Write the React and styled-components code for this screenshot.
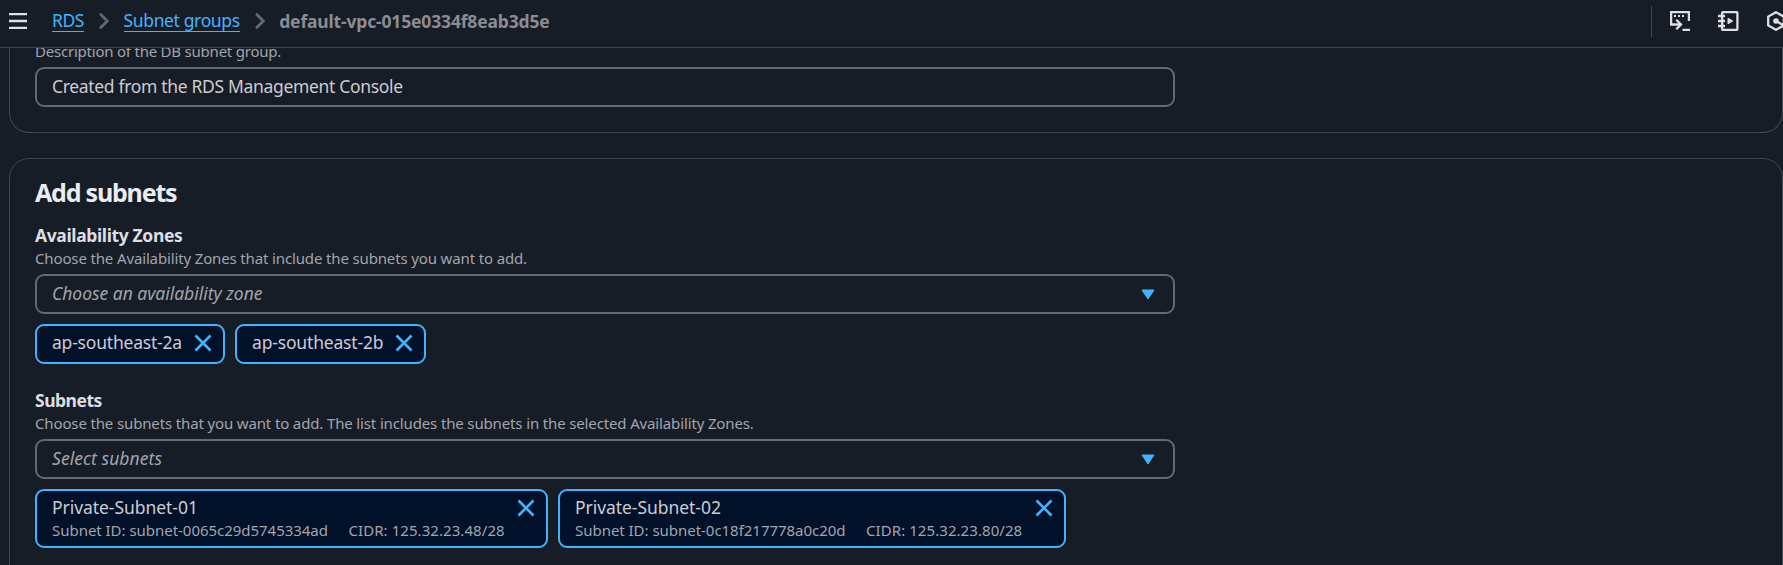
import React from 'react';
import styled, { createGlobalStyle } from 'styled-components';

const Global = createGlobalStyle`
  * { box-sizing: border-box; }
  html, body { margin: 0; height: 565px; overflow: hidden; background: #161d26; }
  body { font-family: "Noto Sans", "Open Sans", sans-serif; font-size: 17.5px; color: #ccccd1; }
`;
const Page = styled.div`
  width: 1783px;
  height: 565px;
  overflow: hidden;
  display: flex;
  flex-direction: column;
  background: #161d26;
`;
const TopBar = styled.header`
  height: 48px;
  flex: none;
  display: flex;
  align-items: center;
  border-bottom: 1px solid #424650;
  padding: 0 0 5px 9px;
`;
const MenuButton = styled.button`
  display: flex;
  padding: 0;
  margin-right: 25px;
  border: 0;
  background: none;
  color: #dedee3;
`;
const Crumbs = styled.nav`
  display: flex;
  align-items: center;
  flex: 1;
  color: #656871;
`;
const Text = styled.span`
  display: block;
  white-space: nowrap;
  font-size: 17.5px;
  line-height: 25px;
  font-weight: ${(p) => (p.$bold ? 700 : 400)};
  letter-spacing: ${(p) => p.$track || 0}px;
  color: #ccccd1;
`;
const CrumbLink = styled(Text)`
  color: #42b4ff;
  border-bottom: 1px solid #42b4ff;
  line-height: 21px;
`;
const CrumbCurrent = styled(Text)`
  color: #8c8c94;
`;
const Heading = styled(Text)`
  font-size: 25px;
  line-height: 30px;
  color: #ebebf0;
`;
const Label = styled(Text)`
  color: #dedee3;
`;
const Placeholder = styled(Text)`
  font-style: italic;
  color: #a4a4ad;
`;
const Hint = styled(Text)`
  font-size: 15px;
  line-height: 20px;
  color: #a4a4ad;
`;
const Chevron = styled.svg`
  flex: none;
  margin: 0 13.5px 0 14px;
`;
const Tools = styled.div`
  display: flex;
  align-items: center;
  gap: 28px;
  height: 31px;
  width: 132px;
  padding-left: 18px;
  border-left: 1px solid #424650;
  color: #dedee3;
  svg { flex: none; }
`;
const Main = styled.main`
  flex: 1;
  min-height: 0;
  overflow: hidden;
  padding-left: 9px;
  display: flex;
  flex-direction: column;
  gap: 25px;
`;
const Panel = styled.section`
  flex: none;
  border: 1px solid #424650;
  border-radius: 20px;
  padding: 0 25px;
  ${(p) => p.$top && 'border-top: 0; border-top-left-radius: 0; border-top-right-radius: 0; height: 85px;'}
  ${(p) => p.$open && 'height: 460px; padding-top: 18px;'}
`;
const Clip = styled.div`
  height: 19px;
  display: flex;
  align-items: flex-end;
  overflow: hidden;
  padding-bottom: 6px;
`;
const Field = styled.div`
  width: 1140px;
  height: 40px;
  display: flex;
  align-items: center;
  justify-content: space-between;
  padding: 0 18px 2px 15px;
  border: 2px solid #656871;
  border-radius: 9px;
`;
const ArrowIcon = styled.svg`
  margin-top: 2px;
`;
const Tokens = styled.div`
  display: flex;
  gap: 10px;
  margin-top: 10px;
`;
const Token = styled.div`
  display: flex;
  width: ${(p) => p.$w}px;
  height: ${(p) => p.$h}px;
  justify-content: space-between;
  padding: 4px 11px 0 15px;
  border: 2px solid #42b4ff;
  border-radius: 9px;
  background: #001129;
`;
const Details = styled.div`
  display: flex;
  gap: 20.5px;
`;
const CloseIcon = styled.svg`
  margin-top: 3.5px;
  flex: none;
`;
const Group = styled.div`
  margin-top: ${(p) => p.$mt}px;
  ${Field} { margin-top: 6px; }
`;

const Sep = () => (
  <Chevron width="12" height="18" viewBox="0 0 12 18" fill="none" stroke="#656871" strokeWidth="2.8"><path d="M2 1.800l7.300 7.200L2 16.200" /></Chevron>
);
const Arrow = () => (
  <ArrowIcon width="14" height="11" viewBox="0 0 14 11"><path d="M1 1h12L7 10z" fill="#42b4ff" stroke="#42b4ff" strokeLinejoin="round" /></ArrowIcon>
);
const Close = () => (
  <CloseIcon width="18" height="18" viewBox="0 0 18 18" fill="none" stroke="#42b4ff" strokeWidth="2.6"><path d="M1.500 1.500l15 15M16.500 1.500l-15 15" /></CloseIcon>
);
const Select = ({ children, track }) => (
  <Field><Placeholder $track={track}>{children}</Placeholder><Arrow /></Field>
);
const Subnet = ({ name, id, cidr, width, idTrack, cidrTrack }) => (
  <Token $w={width} $h={59}>
    <div>
      <Text $track={-0.05}>{name}</Text>
      <Details>
        <Hint $track={idTrack}>{id}</Hint>
        <Hint $track={cidrTrack}>{cidr}</Hint>
      </Details>
    </div>
    <Close />
  </Token>
);

export default function App() {
  return (
    <Page>
      <Global />
      <TopBar>
        <MenuButton aria-label="Menu">
          <svg width="18" height="16" viewBox="0 0 18 16" stroke="currentColor" strokeWidth="2.3"><path d="M0 1.200h18M0 8h18M0 14.800h18" /></svg>
        </MenuButton>
        <Crumbs>
          <CrumbLink $track={-0.4}>RDS</CrumbLink><Sep /><CrumbLink $track={-0.37}>Subnet groups</CrumbLink><Sep />
          <CrumbCurrent $bold $track={-0.16}>default-vpc-015e0334f8eab3d5e</CrumbCurrent>
        </Crumbs>
        <Tools>
          <svg width="20" height="20" viewBox="0 0 20 20" fill="none" stroke="currentColor" strokeWidth="2.3"><path d="M18.900 10V1.100H1.100V13.500H11M6.300 8.800l4.700 4.700-4.700 4.700M12.500 18.900H20" /><path d="M4 5h2M8 5h2M12 5h2" strokeWidth="2" /></svg>
          <svg width="21" height="20" viewBox="0 0 21 20" fill="none" stroke="currentColor" strokeWidth="2.3"><rect x="4.100" y="1.100" width="15.300" height="17.800" rx="1" /><path d="M0 5h7M0 10h7M0 15h7" /><path d="M10 7.200v5.600l4.800-2.800z" fill="currentColor" strokeWidth="1" /></svg>
          <svg width="20" height="20" viewBox="0 0 20 20" fill="none" stroke="currentColor" strokeWidth="2.3"><path d="M9 1.200l7.800 4.400v8.800L9 18.800l-7.800-4.400V5.600zM9 10l7 4" /><circle cx="9" cy="10" r="2" fill="currentColor" strokeWidth="1.600" /></svg>
        </Tools>
      </TopBar>
      <Main>
        <Panel $top>
          <Clip><Hint $track={-0.22}>Description of the DB subnet group.</Hint></Clip>
          <Field><Text $track={-0.33}>Created from the RDS Management Console</Text></Field>
        </Panel>
        <Panel $open>
          <Heading $bold $track={-1.2}>Add subnets</Heading>
          <Group $mt={16}>
            <Label $bold $track={-0.37}>Availability Zones</Label>
            <Hint $track={-0.14}>Choose the Availability Zones that include the subnets you want to add.</Hint>
            <Select track={-0.03}>Choose an availability zone</Select>
            <Tokens>
              <Token $w={190} $h={40}><Text $track={-0.2}>ap-southeast-2a</Text><Close /></Token>
              <Token $w={191} $h={40}><Text $track={-0.17}>ap-southeast-2b</Text><Close /></Token>
            </Tokens>
          </Group>
          <Group $mt={24}>
            <Label $bold $track={-0.5}>Subnets</Label>
            <Hint $track={-0.14}>Choose the subnets that you want to add. The list includes the subnets in the selected Availability Zones.</Hint>
            <Select track={0.06}>Select subnets</Select>
            <Tokens>
              <Subnet width={513} name="Private-Subnet-01" id="Subnet ID: subnet-0065c29d5745334ad" cidr="CIDR: 125.32.23.48/28" idTrack={-0.03} cidrTrack={0.07} />
              <Subnet width={508} name="Private-Subnet-02" id="Subnet ID: subnet-0c18f217778a0c20d" cidr="CIDR: 125.32.23.80/28" idTrack={-0.03} cidrTrack={0.07} />
            </Tokens>
          </Group>
        </Panel>
      </Main>
    </Page>
  );
}
